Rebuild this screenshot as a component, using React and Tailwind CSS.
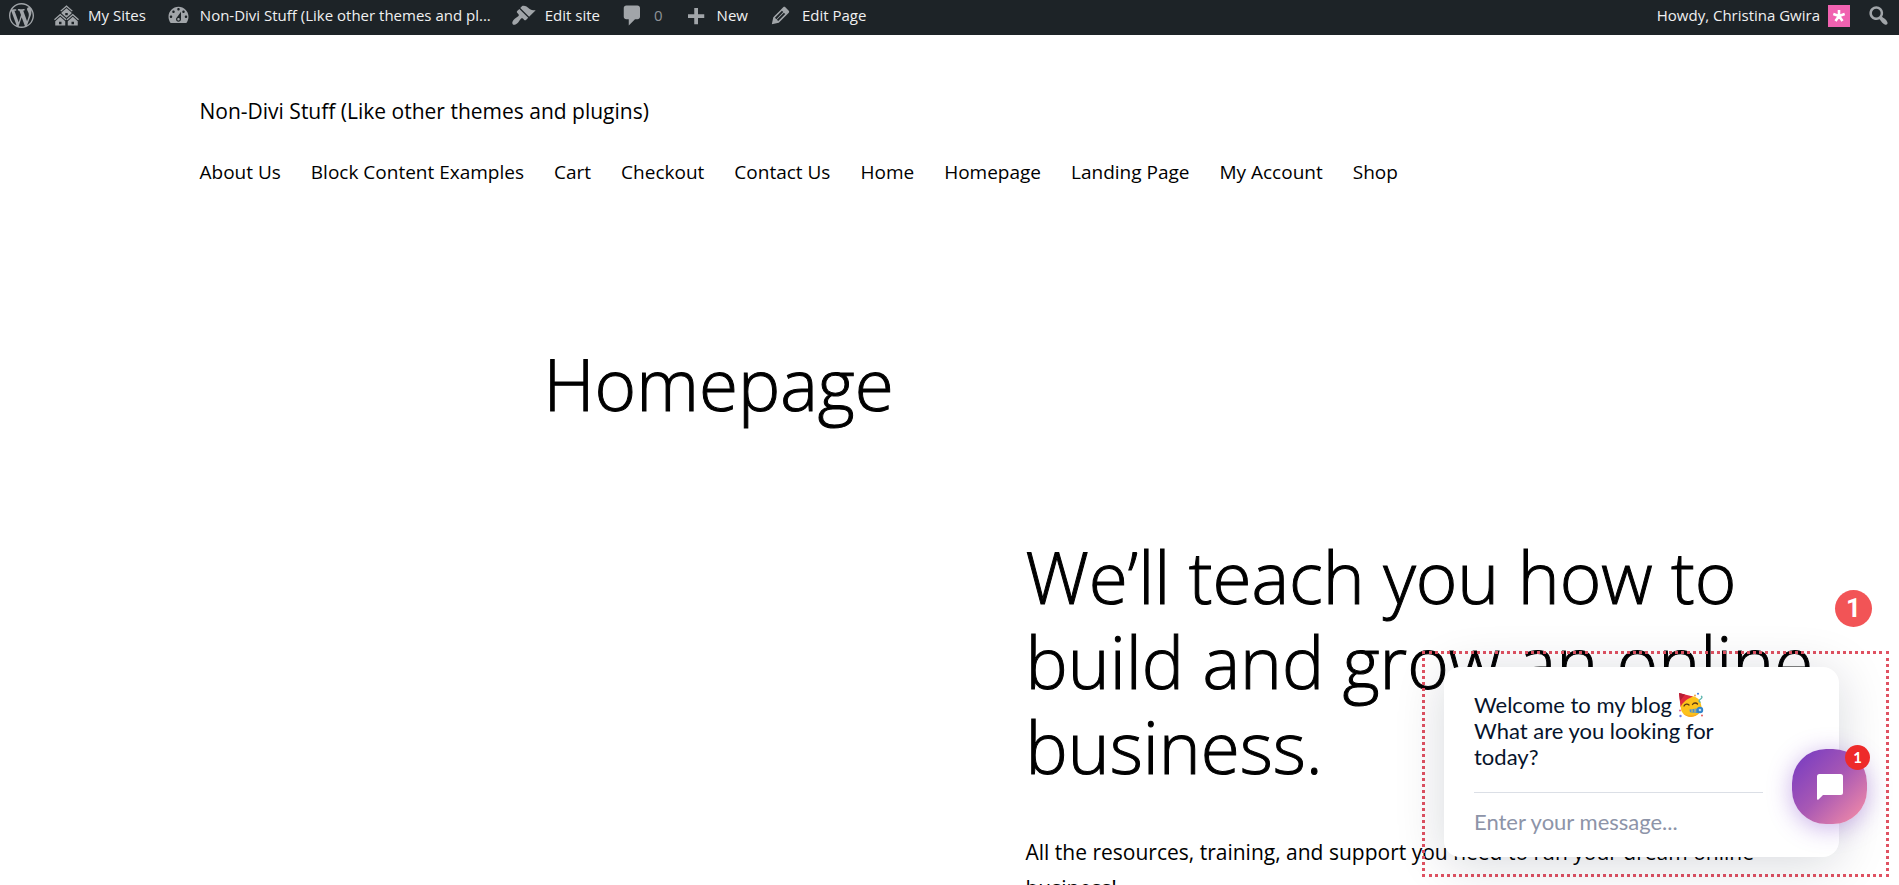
import React, { useState } from "react";

const ICONS = {
  wordpress:
    "M20 10c0-5.51-4.49-10-10-10C4.48 0 0 4.49 0 10c0 5.52 4.48 10 10 10 5.51 0 10-4.48 10-10zM7.78 15.37L4.37 6.22c.55-.02 1.17-.08 1.17-.08.5-.06.44-1.13-.06-1.11 0 0-1.45.11-2.37.11-.18 0-.37 0-.58-.01C4.12 2.69 6.87 1.11 10 1.11c2.33 0 4.45.87 6.05 2.34-.68-.11-1.65.39-1.65 1.58 0 .74.45 1.36.9 2.1.35.61.55 1.36.55 2.46 0 1.49-1.4 5-1.4 5l-3.03-8.37c.54-.02.82-.17.82-.17.5-.05.44-1.25-.06-1.22 0 0-1.44.12-2.38.12-.87 0-2.33-.12-2.33-.12-.5-.03-.56 1.2-.06 1.22l.92.08 1.26 3.41zM17.41 10c.24-.64.74-1.87.43-4.25.7 1.29 1.05 2.71 1.05 4.25 0 3.29-1.73 6.24-4.4 7.78.97-2.59 1.94-5.2 2.92-7.78zM6.1 18.09C3.12 16.65 1.11 13.53 1.11 10c0-1.3.23-2.48.72-3.59C3.25 10.3 4.67 14.2 6.1 18.09zm4.03-6.63l2.58 6.98c-.86.29-1.76.45-2.71.45-.79 0-1.57-.11-2.29-.33.81-2.38 1.62-4.74 2.42-7.1z",
  sites:
    "M14.27 6.87L10 3.14 5.73 6.87 5 6.14l5-4.38 5 4.38zM14 8.42l-4.05 3.43L6 8.38v-.74l4-3.5 4 3.5v.78zM11 9.7V8H9v1.7h2zm-1.73 4.03L5 10 .73 13.73 0 13l5-4.38L10 13zm10 0L15 10l-4.27 3.73L10 13l5-4.38L20 13zM5 11l4 3.5V18H1v-3.5zm10 0l4 3.5V18h-8v-3.5zm-9 6v-2H4v2h2zm10 0v-2h-2v2h2z",
  dashboard:
    "M3.76 16h12.48c1.1-1.37 1.76-3.11 1.76-5 0-4.42-3.58-8-8-8s-8 3.58-8 8c0 1.89.66 3.63 1.76 5zM10 4c.55 0 1 .45 1 1s-.45 1-1 1-1-.45-1-1 .45-1 1-1zM6 6c.55 0 1 .45 1 1s-.45 1-1 1-1-.45-1-1 .45-1 1-1zm8 0c.55 0 1 .45 1 1s-.45 1-1 1-1-.45-1-1 .45-1 1-1zm-5.37 5.55L12 7v6c0 1.1-.9 2-2 2s-2-.9-2-2c0-.57.24-1.08.63-1.45zM4 10c.55 0 1 .45 1 1s-.45 1-1 1-1-.45-1-1 .45-1 1-1zm12 0c.55 0 1 .45 1 1s-.45 1-1 1-1-.45-1-1 .45-1 1-1zm-5 3c0-.55-.45-1-1-1s-1 .45-1 1 .45 1 1 1 1-.45 1-1z",
  brush:
    "M14.48 11.06L7.41 3.99l1.5-1.5c.5-.56 2.3-.47 3.51.32 1.21.8 1.43 1.28 2.91 2.1 1.18.64 2.45 1.26 4.45.85zm-.71.71L6.7 4.7 4.93 6.47c-.39.39-.39 1.02 0 1.41l1.06 1.06c.39.39.39 1.03 0 1.42-.6.6-1.43 1.11-2.21 1.69-.35.26-.7.53-1.01.84C1.43 14.23.4 16.08 1.4 17.07c.99 1 2.84-.03 4.18-1.36.31-.31.58-.66.85-1.02.57-.78 1.08-1.61 1.69-2.21.39-.39 1.02-.39 1.41 0l1.06 1.06c.39.39 1.02.39 1.41 0z",
  comment:
    "M5 2h9c1.1 0 2 .9 2 2v7c0 1.1-.9 2-2 2h-2l-5 5v-5H5c-1.1 0-2-.9-2-2V4c0-1.1.9-2 2-2z",
  plus: "M17 9v3h-5v5H9v-5H4V9h5V4h3v5h5z",
  edit: "M13.89 3.39l2.71 2.72c.46.46.42 1.24.03 1.64l-8.01 8.02-5.56 1.16 1.16-5.58s7.6-7.63 7.99-8.03c.39-.39 1.22-.39 1.68.07zm-2.73 2.79l-5.59 5.61 1.11 1.11 5.54-5.65zm-2.97 8.23l5.58-5.6-1.07-1.08-5.59 5.6z",
  search:
    "M12.14 4.18c1.87 1.87 2.11 4.75.72 6.89.12.1.22.21.36.31.2.16.47.36.81.59.34.24.56.39.66.47.42.31.73.57.94.78.32.32.6.65.84 1 .25.35.44.69.59 1.04.14.35.21.68.18 1-.02.32-.14.59-.36.81s-.49.34-.81.36c-.31.02-.65-.04-.99-.19-.35-.14-.7-.34-1.04-.59-.35-.24-.68-.52-1-.84-.21-.21-.47-.52-.77-.93-.1-.13-.25-.35-.47-.66-.22-.32-.4-.57-.56-.78-.16-.2-.29-.35-.44-.5-2.07 1.09-4.69.76-6.44-.98-2.14-2.15-2.14-5.64 0-7.78 2.15-2.15 5.63-2.15 7.78 0zm-1.41 6.36c1.36-1.37 1.36-3.58 0-4.95-1.37-1.37-3.59-1.37-4.95 0-1.37 1.37-1.37 3.58 0 4.95 1.36 1.37 3.58 1.37 4.95 0z",
};

const pages = [
  "About Us",
  "Block Content Examples",
  "Cart",
  "Checkout",
  "Contact Us",
  "Home",
  "Homepage",
  "Landing Page",
  "My Account",
  "Shop",
];

const Icon = ({ name }) => (
  <svg
    viewBox="0 0 20 20"
    className="size-[25px] shrink-0 fill-[#a1a5a9]"
    aria-hidden="true"
  >
    <path d={ICONS[name]} />
  </svg>
);

const BarLink = ({ icon, children }) => (
  <a href="#" className="flex items-center gap-[9px] whitespace-nowrap">
    <Icon name={icon} />
    {children}
  </a>
);

const AdminBar = () => (
  <div className="flex h-[35px] items-center justify-between bg-[#1d2327] pr-2 pb-1 pl-[9px] text-[15px] text-[#f0f0f1]">
    <div className="flex items-center gap-5">
      <a href="#" aria-label="About WordPress">
        <Icon name="wordpress" />
      </a>
      <BarLink icon="sites">My Sites</BarLink>
      <BarLink icon="dashboard">
        Non-Divi Stuff (Like other themes and pl...
      </BarLink>
      <BarLink icon="brush">Edit site</BarLink>
      <BarLink icon="comment">
        <span className="text-[#8d9298]">0</span>
      </BarLink>
      <BarLink icon="plus">New</BarLink>
      <BarLink icon="edit">Edit Page</BarLink>
    </div>
    <div className="flex items-center gap-4">
      <a href="#" className="flex items-center gap-2 whitespace-nowrap">
        Howdy, Christina Gwira
        <svg viewBox="0 0 22 22" className="size-[22px]" aria-hidden="true">
          <rect width="22" height="22" fill="#f062b0" />
          <path
            d="M11 5v6M11 11l5.700-1.900M11 11l3.500 4.900M11 11l-3.500 4.900M11 11L5.300 9.100"
            stroke="#fff"
            strokeWidth="2.600"
          />
        </svg>
      </a>
      <button type="button" aria-label="Search">
        <Icon name="search" />
      </button>
    </div>
  </div>
);

const PartyFace = () => (
  <svg
    viewBox="0 0 26 26"
    className="inline size-[26px] align-[-5px]"
    role="img"
    aria-label="Party face"
  >
    <circle cx="13" cy="14.500" r="10.500" fill="#fcc21b" />
    <path d="M5 21.500a10.500 10.500 0 0 0 16-.5c-4 3-11 3-16 .5z" fill="#f9a825" />
    <path d="M1 1l14 3.500C9 7 5 10 2.500 15z" fill="#e02a3c" />
    <path d="M1 1l6 1.600L2 9z" fill="#b51c35" />
    <path
      d="M6 14c1-2 3.500-2.500 5-1M14.500 12.500c1.200-1.800 3.800-2 5-.5"
      fill="none"
      stroke="#5a3a12"
      strokeWidth="1.300"
      strokeLinecap="round"
    />
    <path d="M11.500 17.500l9.500-1.200v5l-9-1z" fill="#4a8fd0" />
    <circle cx="22" cy="18" r="3.200" fill="#2f83c9" />
    <circle cx="22" cy="18" r="1.300" fill="#bcdcf5" />
    <path
      d="M14 17.300v2.700M17 17v3.500"
      stroke="#e8c34b"
      strokeWidth="1"
    />
    <path
      d="M23 4c2 1 .500 2.500-1 3.500s-1 2 .5 3"
      fill="none"
      stroke="#5bb5ae"
      strokeWidth="1.300"
    />
    <circle cx="20" cy="1.800" r="1" fill="#3f7fe0" />
    <circle cx="17" cy="3.500" r=".900" fill="#f29a2e" />
    <circle cx="2" cy="18.500" r=".900" fill="#e04b8a" />
    <circle cx="2.500" cy="24" r="1.200" fill="#6f7fe8" />
    <circle cx="24" cy="23.500" r=".900" fill="#e04b4b" />
  </svg>
);

const ChatWidget = () => {
  const [message, setMessage] = useState("");

  return (
    <div className="absolute right-[10px] bottom-2 w-[467px] border-[3px] border-dotted border-[#e05262] pt-[13px] pr-[47px] pb-[17px] pl-[19px]">
      <div className="relative rounded-2xl bg-white pt-[25px] pr-[76px] pl-[30px] font-[Lato,'Open_Sans',sans-serif] text-[22px] shadow-[0_6px_50px_rgba(0,18,46,0.16)]">
        <p className="leading-[26px] text-[#06132b]">
          Welcome to my blog <PartyFace />
          <br />
          What are you looking for today?
        </p>
        <input
          type="text"
          aria-label="Enter your message"
          placeholder="Enter your message..."
          value={message}
          onChange={(e) => setMessage(e.target.value)}
          className="mt-[22px] block h-[65px] w-full border-t border-[#dbdfe6] pb-2 outline-none placeholder:text-[#8d94a8]"
        />
        <button
          type="button"
          aria-label="Open chat"
          className="absolute right-[-28px] bottom-[33px] flex size-[75px] items-center justify-center rounded-[34px] bg-linear-[135deg,#7d3fc0_10%,#a858b4_50%,#ee88a8_92%] shadow-[0_4px_24px_rgba(120,60,200,0.4)]"
        >
          <svg viewBox="0 0 26 26" className="size-[26px]" aria-hidden="true">
            <path
              d="M2.500 0h21A2.500 2.500 0 0 1 26 2.500v16a2.500 2.500 0 0 1-2.500 2.500H6l-4.500 4.500Q0 26.500 0 24.500v-22A2.500 2.500 0 0 1 2.500 0z"
              fill="#fff"
            />
          </svg>
          <span className="absolute -top-1 -right-[3px] flex size-[25px] items-center justify-center rounded-full bg-[#ee2a2a] text-[15px] font-bold text-white">
            1
          </span>
        </button>
      </div>
      <span className="absolute right-[14px] bottom-[247px] flex size-[37px] items-center justify-center rounded-full bg-[#f25456] font-[Roboto,sans-serif] text-[26px] font-bold text-white">
        1
      </span>
    </div>
  );
};

const App = () => {
  return (
    <div className="relative h-screen overflow-hidden bg-white font-['Open_Sans','Noto_Sans',sans-serif] text-black">
      <AdminBar />
      <header className="mx-auto max-w-[1500px] pt-[60px]">
        <a href="#" className="block text-[21px] leading-8">
          Non-Divi Stuff (Like other themes and plugins)
        </a>
        <nav className="mt-[30px] flex flex-wrap gap-[30px] text-[19px] leading-[30px]">
          {pages.map((page) => (
            <a key={page} href="#">
              {page}
            </a>
          ))}
        </nav>
      </header>
      <main>
        <h1 className="mx-auto mt-[154px] max-w-[812px] text-[71px] leading-[85px] font-light [-webkit-text-stroke:1px_black]">
          Homepage
        </h1>
        <section className="mt-[108px] grid grid-cols-2 gap-[152px] px-[43px]">
          <div className="col-start-2 max-w-[812px]">
            <h2 className="text-[71px] leading-[85px] font-light [-webkit-text-stroke:1px_black]">
              We’ll teach you how to build and grow an online business.
            </h2>
            <p className="mt-[45px] text-[21px] leading-9">
              All the resources, training, and support you need to run your
              dream online business!
            </p>
          </div>
        </section>
      </main>
      <ChatWidget />
    </div>
  );
};

export default App;
